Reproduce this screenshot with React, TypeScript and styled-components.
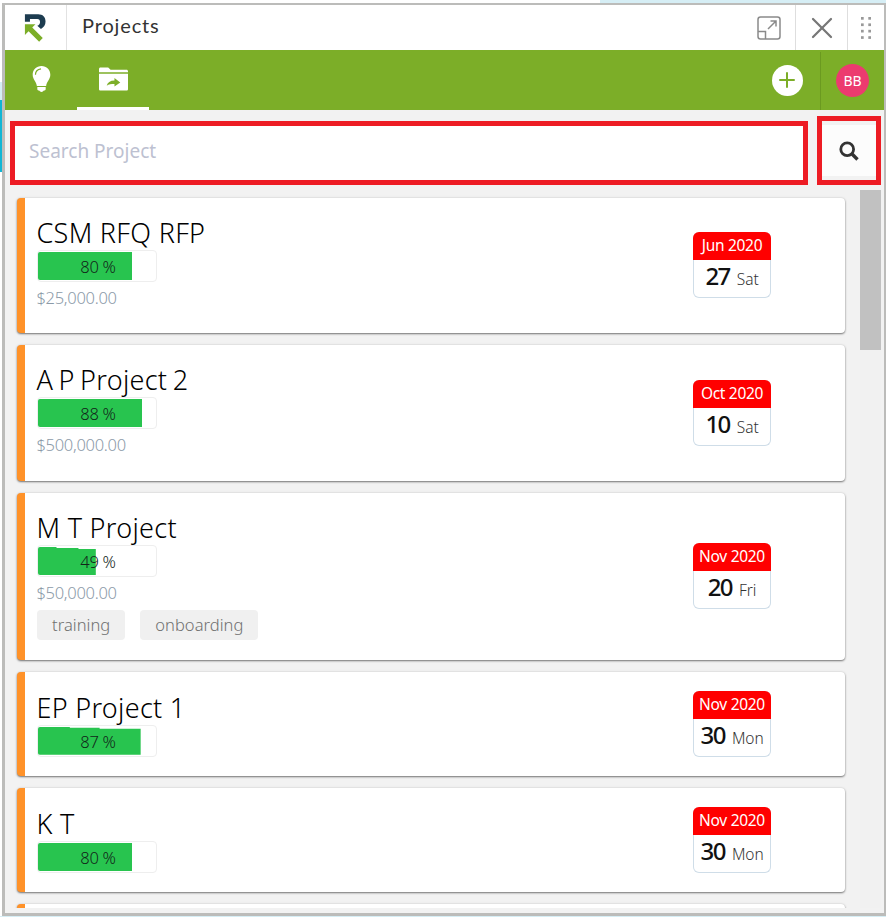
import React from 'react';
import styled, { createGlobalStyle } from 'styled-components';
import { X, Plus } from 'lucide-react';

const GlobalStyle = createGlobalStyle`
  html, body {
    margin: 0;
    padding: 0;
    background: #ffffff;
    font-family: "Noto Sans", "Liberation Sans", sans-serif;
  }
`;

const Page = styled.div`
  box-sizing: border-box;
  width: 886px;
  height: 917px;
  padding: 3px 0 1px 2px;
  overflow: hidden;
  background:
    linear-gradient(#10b5d5, #10b5d5) 0 100px / 2px 72px no-repeat,
    linear-gradient(#d5eef5, #d5eef5) 0 82px / 2px 18px no-repeat,
    linear-gradient(#d6eef5, #d6eef5) 0 916px / 886px 1px no-repeat,
    linear-gradient(#d6eef5, #d6eef5) 600px 0 / 286px 3px no-repeat;
`;

const Frame = styled.div`
  box-sizing: border-box;
  height: 100%;
  border: 3px solid #bcbcba;
  border-top-width: 2px;
  border-right-width: 2px;
  background: #f2f2f2;
  display: flex;
  flex-direction: column;
  overflow: hidden;
`;

const TitleBar = styled.header`
  display: flex;
  align-items: stretch;
  height: 45px;
  background: #fff;
  flex: none;
`;

const LogoCell = styled.div`
  box-sizing: border-box;
  width: 62px;
  display: flex;
  align-items: center;
  justify-content: center;
  border-right: 1px solid #e2e2e2;
  padding-right: 2px;
`;

const Title = styled.div`
  flex: 1;
  padding-left: 15px;
  font-family: Lato, sans-serif;
  font-size: 20px;
  letter-spacing: 0.85px;
  line-height: 41px;
  color: #333;
`;

const TitleButton = styled.div<{ $w: number; $line?: boolean }>`
  box-sizing: border-box;
  width: ${p => p.$w}px;
  display: flex;
  align-items: center;
  justify-content: center;
  border-left: ${p => (p.$line ? '1px solid #dedede' : 'none')};
  color: #777;
`;

const GreenBar = styled.nav`
  display: flex;
  align-items: stretch;
  height: 60px;
  background: #7cae28;
  flex: none;
`;

const NavTab = styled.div<{ $active?: boolean; $w: number }>`
  box-sizing: border-box;
  width: ${p => p.$w}px;
  display: flex;
  align-items: center;
  justify-content: center;
  border-bottom: 3px solid ${p => (p.$active ? '#fff' : 'transparent')};
`;

const NavSpacer = styled.div`
  flex: 1;
`;

const AddCell = styled.div`
  box-sizing: border-box;
  width: 64px;
  display: flex;
  align-items: center;
  justify-content: center;
  padding-right: 2px;
`;

const AddCircle = styled.div`
  width: 31px;
  height: 31px;
  border-radius: 50%;
  background: #fff;
  color: #7cae28;
  display: flex;
  align-items: center;
  justify-content: center;
`;

const AvatarCell = styled.div`
  box-sizing: border-box;
  width: 64px;
  margin: 2px 0 0;
  border-left: 1px solid #6b9a20;
  display: flex;
  align-items: center;
  justify-content: center;
  padding-bottom: 2px;
`;

const Avatar = styled.div`
  width: 33px;
  height: 33px;
  border-radius: 50%;
  background: #ec3b6f;
  color: #fff;
  font-size: 14px;
  line-height: 33px;
  text-align: center;
`;

const SearchRow = styled.div`
  display: flex;
  align-items: flex-end;
  gap: 9px;
  height: 80px;
  padding: 0 0 5px 5px;
  box-sizing: border-box;
  flex: none;
`;

const SearchBox = styled.div`
  box-sizing: border-box;
  width: 798px;
  height: 64px;
  border: 5px solid #ed1c24;
  background: #fff;
  padding-left: 14px;
  font-size: 19px;
  line-height: 50px;
  color: #bdc1d1;
`;

const SearchButton = styled.div`
  box-sizing: border-box;
  width: 64px;
  height: 69px;
  border: 5px solid #ed1c24;
  background: #f2f2f2;
  display: flex;
  align-items: center;
`;

const SearchGlyph = styled.div`
  width: 100%;
  height: 51px;
  background: #fcfcfc;
  display: flex;
  align-items: center;
  justify-content: center;
`;

const Body = styled.div`
  flex: 1;
  min-height: 0;
  display: flex;
  overflow: hidden;
  padding-bottom: 5px;
`;

const CardList = styled.div`
  width: 855px;
  flex: none;
  padding: 8px 0 0 12px;
  box-sizing: border-box;
  overflow: hidden;
  display: flex;
  flex-direction: column;
  gap: 12px;
`;

const Card = styled.article`
  box-sizing: border-box;
  width: 828px;
  flex: none;
  display: flex;
  align-items: center;
  justify-content: space-between;
  background: #fff;
  border-left: 8px solid #ff9229;
  border-radius: 4px;
  box-shadow: 0 1px 2px rgba(0, 0, 0, 0.5), 0 0 3px rgba(0, 0, 0, 0.1);
  padding: 18px 74px 19.3px 12px;
`;

const CardInfo = styled.div`
  display: flex;
  flex-direction: column;
  align-items: flex-start;
`;

const CardTitle = styled.div<{ $ws?: number }>`
  font-size: 27px;
  font-weight: 300;
  line-height: 34px;
  margin-left: -0.5px;
  letter-spacing: 0.3px;
  word-spacing: ${p => p.$ws ?? 0}px;
  color: #000;
`;

const Progress = styled.div`
  box-sizing: border-box;
  position: relative;
  width: 120px;
  height: 32px;
  border: 1px solid #eeeeee;
  border-radius: 4px;
  padding: 1px 0;
`;

const ProgressFill = styled.div`
  height: 28px;
  background: #28c44f;
  border-radius: 2px 0 0 2px;
`;

const ProgressText = styled.div`
  position: absolute;
  inset: 0;
  padding-left: 2px;
  font-size: 16.5px;
  font-weight: 300;
  letter-spacing: -0.3px;
  line-height: 31px;
  text-align: center;
  color: #12261a;
`;

const Amount = styled.div`
  font-size: 16.5px;
  font-weight: 300;
  letter-spacing: -0.3px;
  line-height: 22px;
  margin: 5px 0 5.2px -0.5px;
  color: #8b9aa8;
`;

const Tags = styled.div`
  display: flex;
  gap: 15px;
  margin: 1px 0 1px;
`;

const Tag = styled.div`
  background: #f0f0f0;
  color: #6f6f6f;
  border-radius: 4px;
  height: 30px;
  line-height: 30px;
  padding: 0 15px;
  font-size: 16.5px;
  font-weight: 300;
  letter-spacing: 0.05px;
`;

const DateBox = styled.div`
  box-sizing: border-box;
  width: 78px;
  height: 66px;
  margin-top: 0.6px;
  border: 1px solid #cfdde8;
  border-top: none;
  border-radius: 6px;
`;

const DateHead = styled.div`
  margin: 0 -1px;
  height: 28px;
  background: #ff0000;
  border-radius: 6px 6px 0 0;
  color: #fff;
  font-size: 15.5px;
  letter-spacing: -0.3px;
  line-height: 27px;
  text-align: center;
`;

const DateBody = styled.div`
  display: flex;
  align-items: baseline;
  justify-content: center;
  gap: 7px;
  height: 37px;
  line-height: 31px;
`;

const DayNumber = styled.span`
  font-size: 24px;
  font-weight: 500;
  letter-spacing: -1.5px;
  color: #111;
`;

const DayName = styled.span`
  font-size: 15.5px;
  font-weight: 300;
  letter-spacing: -0.1px;
  color: #333;
`;

const ScrollTrack = styled.div`
  width: 21px;
  flex: none;
  background: #f1f1f1;
`;

const ScrollThumb = styled.div`
  height: 160px;
  background: #c1c1c1;
`;

type Project = {
  title: string;
  ws?: number;
  pct: number;
  clip?: string;
  amount?: string;
  tags?: string[];
  month: string;
  day: string;
  name: string;
};

const projects: Project[] = [
  { title: 'CSM RFQ RFP', pct: 80, amount: '$25,000.00', month: 'Jun 2020', day: '27', name: 'Sat' },
  { title: 'A P Project 2', ws: -2, pct: 88, amount: '$500,000.00', month: 'Oct 2020', day: '10', name: 'Sat' },
  {
    title: 'M T Project',
    pct: 49,
    // the bar is cut in steps along its top in the picture
    clip: 'polygon(0 0, 32% 0, 32% 1px, 70% 1px, 70% 2px, 100% 2px, 100% 100%, 0 100%)',
    amount: '$50,000.00',
    tags: ['training', 'onboarding'],
    month: 'Nov 2020',
    day: '20',
    name: 'Fri',
  },
  {
    title: 'EP Project 1',
    pct: 87,
    clip: 'polygon(0 0, 31% 0, 31% 1px, 60% 1px, 60% 2px, 100% 2px, 100% 100%, 0 100%)',
    month: 'Nov 2020',
    day: '30',
    name: 'Mon',
  },
  { title: 'K T', pct: 80, month: 'Nov 2020', day: '30', name: 'Mon' },
];

const Logo = () => (
  <svg width="22" height="30" viewBox="0 0 24 32">
    <path d="M1 1h14.500c5 0 8 3 8 8 0 4-2 6.500-5 8l-4-3.500c2-.5 3-2 3-4 0-2-1-3.200-3-3.200H6.500v3H1z" fill="#1d3c50" />
    <path d="M1 12h11.500L9 15.500 20.500 27l-4 4L5 19.500 1 23.500z" fill="#7cae28" />
  </svg>
);

const ExpandIcon = () => (
  <svg width="24" height="24" viewBox="0 0 24 24" fill="none" stroke="#8a8a8a" strokeWidth="1.5">
    <rect x="1" y="1" width="22" height="22" rx="2.500" />
    <path d="M1 15.500h7.500V23" />
    <path d="M11 13 19 5M13.500 5H19v5.500" />
  </svg>
);

const DotsIcon = () => (
  <svg width="10" height="22" viewBox="0 0 10 22" fill="#999">
    {[0, 6.4, 12.8, 19.2].map(y => (
      <React.Fragment key={y}>
        <rect x="0" y={y} width="2.700" height="2.700" />
        <rect x="7.300" y={y} width="2.700" height="2.700" />
      </React.Fragment>
    ))}
  </svg>
);

const BulbIcon = () => (
  <svg width="19" height="26" viewBox="0 0 20 28" fill="#fff">
    <path d="M10 0C4.500 0 .5 4 .5 9.500c0 5 4 7.500 4.500 12h10c.5-4.500 4.500-7 4.500-12C19.500 4 15.500 0 10 0z" />
    <path d="M5.500 22.500h9V25c0 1-1 1.500-2 1.500-.5 1-1.500 1.500-2.500 1.500s-2-.5-2.500-1.500c-1 0-2-.5-2-1.500z" />
    <path d="M3.500 9.500C3.500 6 6 3.500 9.500 3" fill="none" stroke="#7cae28" strokeWidth="1.300" />
  </svg>
);

const FolderIcon = () => (
  <svg width="29" height="24" viewBox="0 0 30 24">
    <path d="M1.500 0h8l2.500 2.500h16.500c.8 0 1.500.7 1.500 1.500v1H0V1.500C0 .7.700 0 1.500 0z" fill="#fff" />
    <path d="M0 6.500h30V22.500c0 .8-.7 1.500-1.500 1.500h-27C.7 24 0 23.300 0 22.500z" fill="#fff" />
    <path d="M8 19c.8-3.500 3.500-5.500 8-5.500V11l6 4.500-6 4.300v-2.600c-3.500 0-6 .3-8 1.800z" fill="#7cae28" />
  </svg>
);

const SearchIcon = () => (
  <svg width="20" height="20" viewBox="0 0 20 20" fill="none" stroke="#333">
    <circle cx="8.200" cy="8.200" r="6.400" strokeWidth="2.800" />
    <path d="M12.800 12.800 18.500 18.500" strokeWidth="3.400" />
  </svg>
);

const App: React.FC = () => (
  <Page>
    <GlobalStyle />
    <Frame>
      <TitleBar>
        <LogoCell><Logo /></LogoCell>
        <Title>Projects</Title>
        <TitleButton $w={52}><ExpandIcon /></TitleButton>
        <TitleButton $w={52} $line><X size={36} strokeWidth={1.5} /></TitleButton>
        <TitleButton $w={37} $line><DotsIcon /></TitleButton>
      </TitleBar>
      <GreenBar>
        <NavTab $w={72}><BulbIcon /></NavTab>
        <NavTab $w={72} $active><FolderIcon /></NavTab>
        <NavSpacer />
        <AddCell><AddCircle><Plus size={24} strokeWidth={2} /></AddCircle></AddCell>
        <AvatarCell><Avatar>BB</Avatar></AvatarCell>
      </GreenBar>
      <SearchRow>
        <SearchBox>Search Project</SearchBox>
        <SearchButton>
          <SearchGlyph><SearchIcon /></SearchGlyph>
        </SearchButton>
      </SearchRow>
      <Body>
        <CardList>
          {projects.map(p => (
            <Card key={p.title}>
              <CardInfo>
                <CardTitle $ws={p.ws}>{p.title}</CardTitle>
                <Progress>
                  <ProgressFill style={{ width: `${p.pct}%`, clipPath: p.clip }} />
                  <ProgressText>{p.pct} %</ProgressText>
                </Progress>
                {p.amount && <Amount>{p.amount}</Amount>}
                {p.tags && (
                  <Tags>
                    {p.tags.map(t => <Tag key={t}>{t}</Tag>)}
                  </Tags>
                )}
              </CardInfo>
              <DateBox>
                <DateHead>{p.month}</DateHead>
                <DateBody>
                  <DayNumber>{p.day}</DayNumber>
                  <DayName>{p.name}</DayName>
                </DateBody>
              </DateBox>
            </Card>
          ))}
          <Card>
            <CardInfo>
              <CardTitle>&nbsp;</CardTitle>
            </CardInfo>
          </Card>
        </CardList>
        <ScrollTrack><ScrollThumb /></ScrollTrack>
      </Body>
    </Frame>
  </Page>
);

export default App;
